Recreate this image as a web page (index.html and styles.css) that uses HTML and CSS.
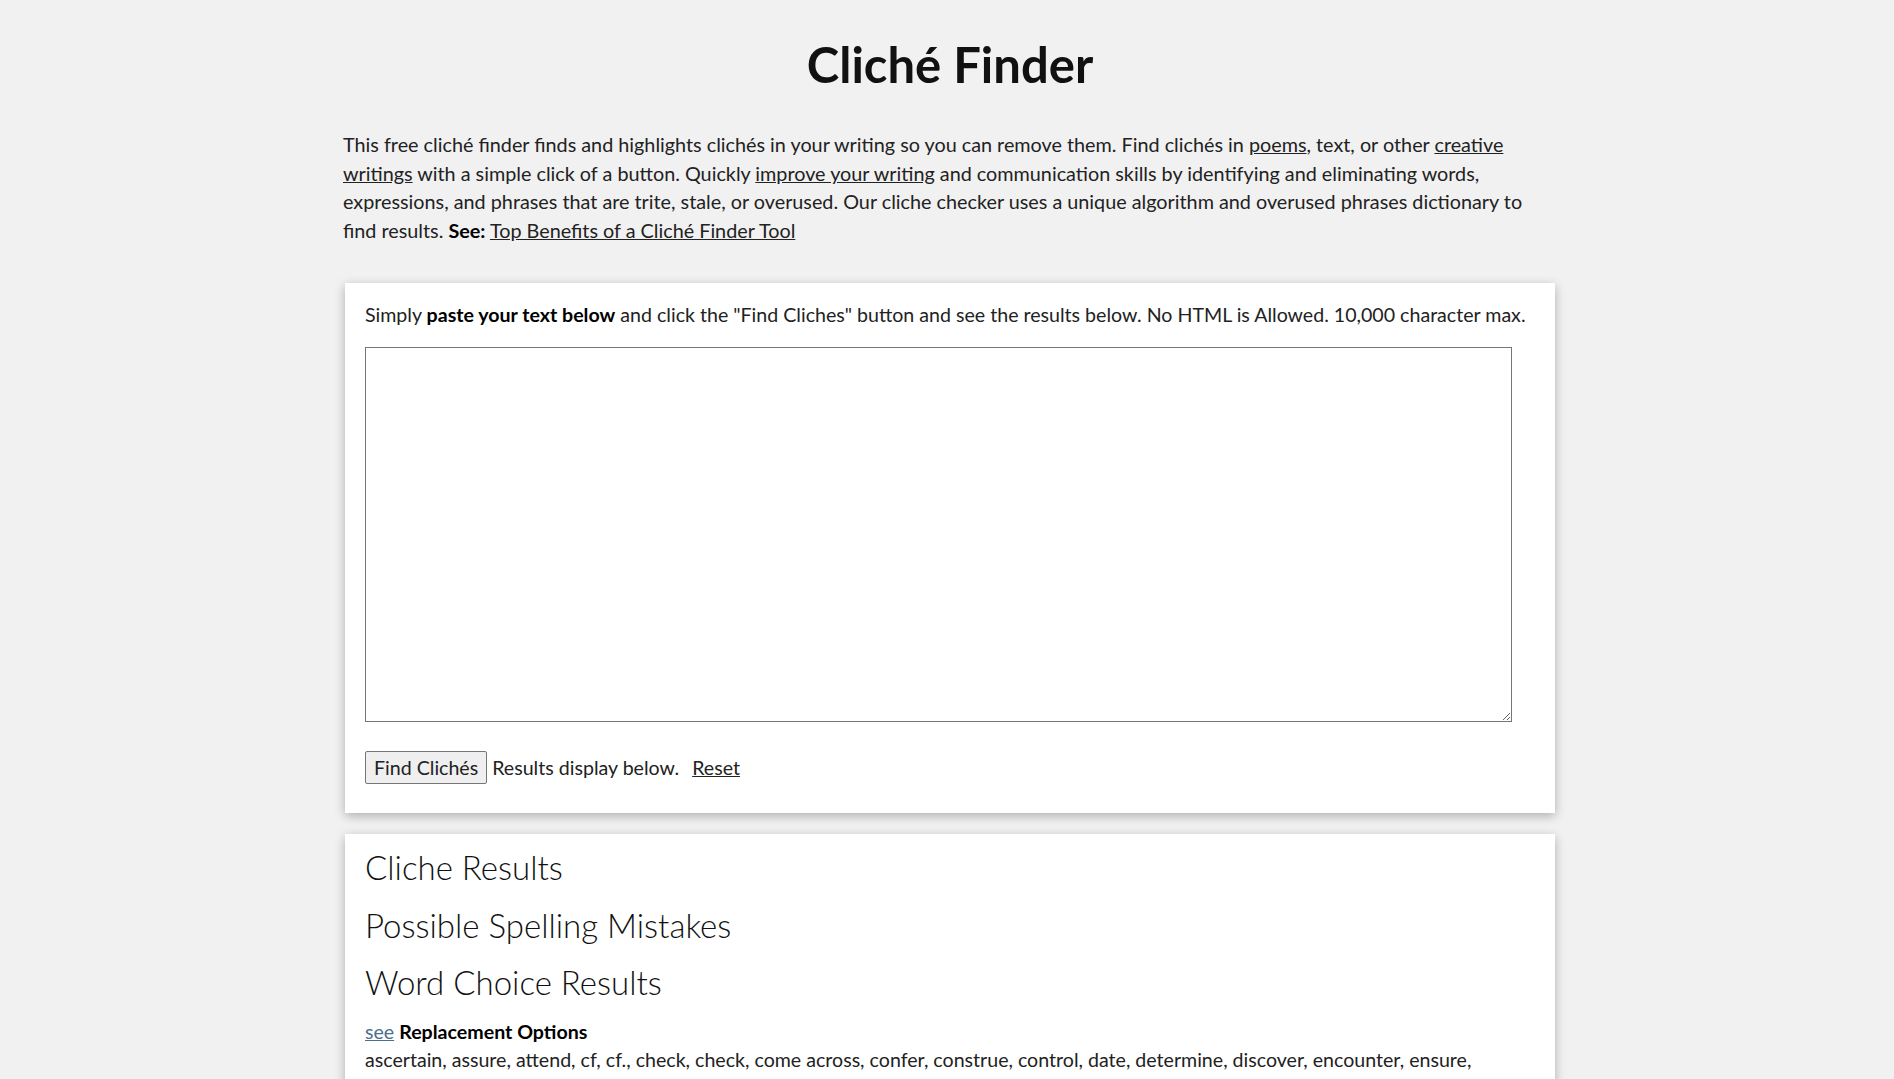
FILE: index.html
```html
<!DOCTYPE html>
<html>
<head>
  <title>Cliché Finder</title>
  <link rel="stylesheet" href="styles.css">
</head>
<body>

  <div class="page">
    <h1 class="title">Cliché Finder</h1>

    <p class="intro">This free cliché finder finds and highlights clichés in your writing so you can remove them. Find clichés in <a href="#">poems</a>, text, or other <a href="#">creative writings</a> with a simple click of a button. Quickly <a href="#">improve your writing</a> and communication skills by identifying and eliminating words, expressions, and phrases that are trite, stale, or overused. Our cliche checker uses a unique algorithm and overused phrases dictionary to find results. <b>See:</b> <a href="#">Top Benefits of a Cliché Finder Tool</a></p>

    <div class="card">
      <p class="lead">Simply <b>paste your text below</b> and click the "Find Cliches" button and see the results below. No HTML is Allowed. 10,000 character max.</p>
      <textarea class="input" id="input"></textarea>
      <div class="actions">
        <button class="button">Find Clichés</button>
        <span>Results display below.&nbsp;</span>
        <a href="#" class="reset">Reset</a>
      </div>
    </div>

    <div class="card results">
      <h2 class="result-title">Cliche Results</h2>
      <h2 class="result-title">Possible Spelling Mistakes</h2>
      <h2 class="result-title">Word Choice Results</h2>
      <div class="choice">
        <a href="#" class="see">see</a> <b>Replacement Options</b><br>
        ascertain, assure, attend, cf, cf., check, check, come across, confer, construe, control, date, determine, discover, encounter, ensure, examine, find, find out, get a line, get wind, get word, hear, insure, learn, mark, memorize, note, notice, observe, picture, realise, realize, reckon, regard, see to it, visualise, visualize
      </div>
    </div>
  </div>

</body>
</html>
```

FILE: styles.css
```css
body {
  margin: 0;
  background-color: #f1f1f1;
  font-family: Lato, "Open Sans", sans-serif;
  color: #222;
}

.page {
  width: 1210px;
  margin: 0 auto;
  padding-left: 6px;
}

a {
  color: #222;
}

.title {
  margin: 0;
  padding-top: 36px;
  text-align: center;
  font-size: 49px;
  line-height: 56px;
  font-weight: 700;
  color: #111;
}

.intro {
  margin: 38px 0 39px -2px;
  font-size: 19.8px;
  line-height: 28.5px;
}

.intro b {
  color: #000;
}

.card {
  background-color: #fff;
  box-shadow: 0 3px 10px rgba(0, 0, 0, 0.28);
  padding: 18px 20px 29px;
}

.lead {
  margin: 0 0 18px;
  font-size: 19.6px;
  line-height: 28px;
}

.lead b {
  color: #000;
}

.input {
  display: block;
  width: 98%;
  height: 375px;
  box-sizing: border-box;
  border: 1px solid #767676;
  margin: 0 0 29px;
  font-family: inherit;
  font-size: 16px;
}

.actions {
  display: flex;
  align-items: center;
  font-size: 19.6px;
  line-height: 33px;
}

.button {
  height: 33px;
  padding: 0 8px;
  margin-right: 5px;
  font-family: inherit;
  font-size: 19.6px;
  color: #222;
  background-color: #efefef;
  border: 1px solid #767676;
  border-radius: 2px;
}

.reset {
  margin-left: 8px;
}

.results {
  margin-top: 21px;
  padding-top: 5px;
  padding-bottom: 40px;
}

.result-title {
  margin: 0;
  font-size: 33px;
  line-height: 57.5px;
  font-weight: 300;
  color: #111;
}

.choice {
  margin-top: 6px;
  font-size: 19.6px;
  line-height: 28px;
}

.choice b {
  color: #000;
}

.see {
  color: #4a6f8f;
}
```
